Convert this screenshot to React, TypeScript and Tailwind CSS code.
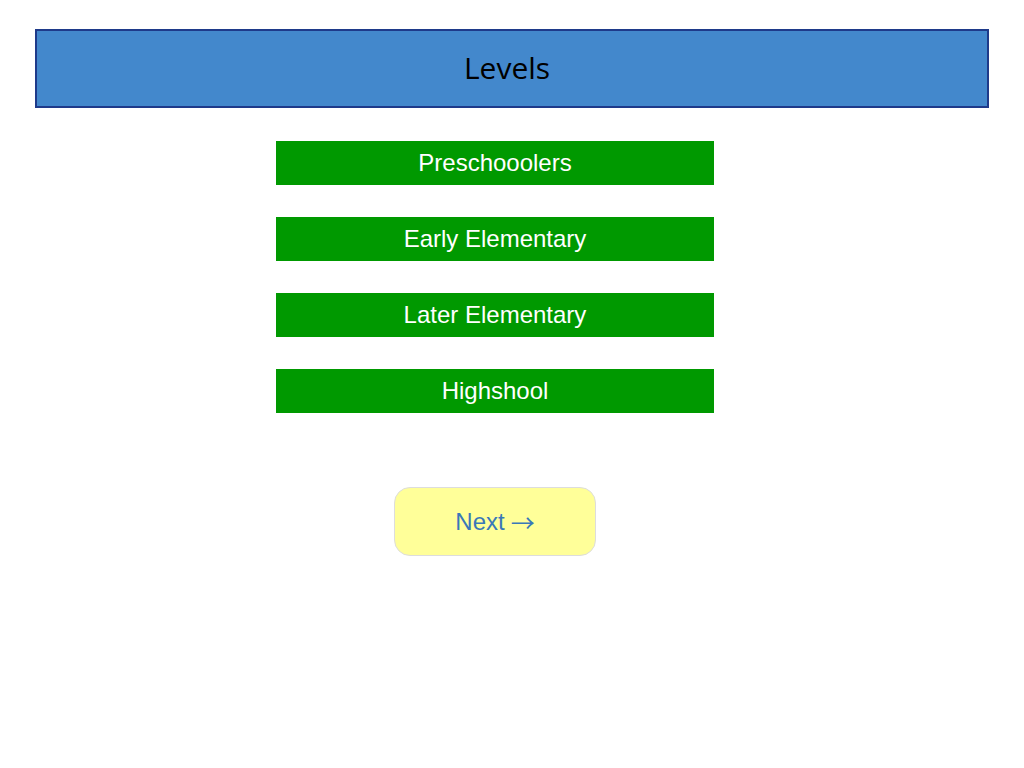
export default function App() {
  const levels = ["Preschooolers", "Early Elementary", "Later Elementary", "Highshool"]

  return (
    <div className="min-h-screen bg-white pt-[29px]">
      {/* Header */}
      <header className="mx-[35px] h-[79px] w-[954px] border-2 border-[#1e3a8a] bg-[#4388cc] flex items-center justify-center">
        <h1 className="pr-[10px] pb-[2px] text-[30px] text-black font-['Open_Sans',sans-serif]">Levels</h1>
      </header>

      {/* Level buttons */}
      <div className="w-[990px] flex flex-col items-center pt-[33px] font-['Liberation_Sans',Arial,sans-serif]">
        {levels.map((level) => (
          <button
            key={level}
            className="w-[438px] h-[44px] mb-[32px] bg-[#009900] text-white text-[24px] flex items-center justify-center"
          >
            {level}
          </button>
        ))}

        <button className="mt-[42px] w-[202px] h-[69px] rounded-[16px] border border-[#dddddd] bg-[#ffff99] text-[#3a78b8] text-[24px] flex items-center justify-center">
          Next <span className="ml-[6px] font-['Noto_Sans_CJK_SC',sans-serif] text-[24px]">→</span>
        </button>
      </div>
    </div>
  )
}
